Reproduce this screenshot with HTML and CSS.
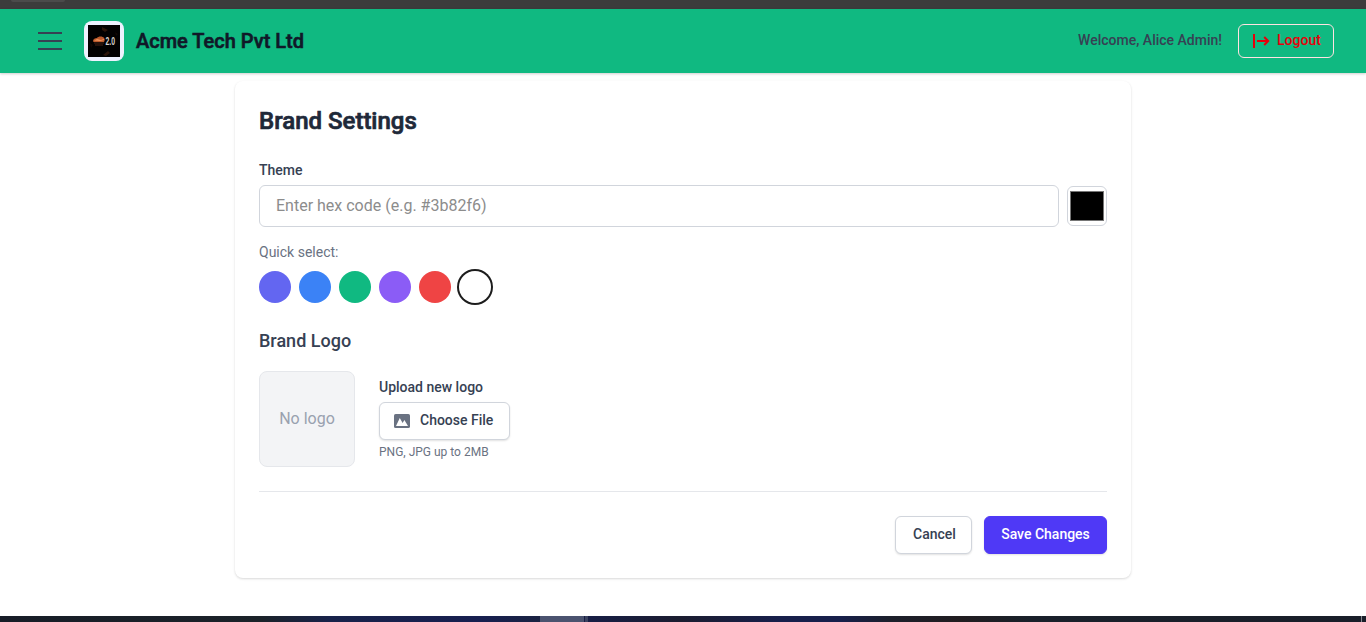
FILE: index.html
```
<!DOCTYPE html>
<html lang="en">
<head>
<meta charset="utf-8">
<title>Brand Settings</title>
<link rel="stylesheet" href="styles.css">
</head>
<body>
<div class="window-strip"><span class="window-tab"></span></div>
<header class="header">
  <svg class="menu" viewBox="0 0 24 18" width="24" height="18"><path d="M0 1h24M0 9h24M0 17h24" stroke="#364153" stroke-width="2"/></svg>
  <div class="brand-mark">
    <svg viewBox="0 0 32 32" width="32" height="32">
      <rect width="32" height="32" fill="#020101"/>
      <path d="M14 2l6 3-3 2-3-2zM15 30l5-4 2 2-4 3z" fill="#2b1409"/>
      <path d="M2 18l3 2-2 3zM27 7l3 2-2 2z" fill="#120905"/>
      <path d="M5 16c0-2 2-3 4-3 1-2 6-2 7 0 1 1 1 2 0 4H8c-2 0-3 0-3-1z" fill="#bc592b"/>
      <path d="M6 15.500l3-1.500 4 1 3-1v1l-4 1z" fill="#ef955d"/>
      <path d="M6 18h10M7 20h8" stroke="#4a2416" stroke-width="1"/>
      <text class="mark-text" x="17.500" y="20.300" textLength="9.500" lengthAdjust="spacingAndGlyphs">2.0</text>
    </svg>
  </div>
  <div class="company">Acme Tech Pvt Ltd</div>
  <div class="welcome">Welcome, Alice Admin!</div>
  <button class="logout">
    <svg viewBox="0 0 18 14" width="18" height="14" fill="none" stroke="#e7000b" stroke-width="2"><path d="M2 0v14M5 7h11.2M12.2 3l4 4-4 4"/></svg>
    <span>Logout</span>
  </button>
</header>
<main class="card">
  <h1 class="title">Brand Settings</h1>
  <label class="label theme-label" for="theme">Theme</label>
  <div class="theme-row">
    <input class="hex" id="theme" placeholder="Enter hex code (e.g. #3b82f6)">
    <div class="picker"><span class="picker-color"></span></div>
  </div>
  <p class="quick">Quick select:</p>
  <div class="swatches">
    <span class="swatch indigo"></span>
    <span class="swatch blue"></span>
    <span class="swatch green"></span>
    <span class="swatch violet"></span>
    <span class="swatch red"></span>
    <span class="swatch white"></span>
  </div>
  <h2 class="subtitle">Brand Logo</h2>
  <div class="logo-row">
    <div class="preview">No logo</div>
    <div class="upload">
      <div class="label upload-label">Upload new logo</div>
      <button class="button choose">
        <svg viewBox="0 0 16 14" width="16" height="14"><rect width="16" height="14" rx="1.6" fill="#6a7282"/><path d="M2 12l3.800-8 2.800 5 1.800-3 3.600 6z" fill="#fff"/></svg>
        <span>Choose File</span>
      </button>
      <p class="hint">PNG, JPG up to 2MB</p>
    </div>
  </div>
  <div class="actions">
    <button class="button cancel">Cancel</button>
    <button class="button save">Save Changes</button>
  </div>
</main>
<footer class="taskbar"><span class="task-active"></span><span class="task-edge"></span><span class="task-end"></span></footer>
</body>
</html>
```
FILE: styles.css
```
* { box-sizing: border-box; }
body {
  margin: 0;
  height: 622px;
  display: flex;
  flex-direction: column;
  overflow: hidden;
  background: #fff;
  font-family: Roboto, "Liberation Sans", sans-serif;
  font-size: 16px;
  line-height: 24px;
}
h1, h2, p { margin: 0; }
button, input { font-family: inherit; }
svg { display: block; flex: none; }

.window-strip { flex: none; height: 9px; background: #3c3c3c; }
.window-tab {
  display: block;
  width: 54px;
  height: 2px;
  margin-left: 11px;
  border-radius: 0 0 6px 6px;
  background: #4b4b4b;
}

.header {
  flex: none;
  height: 64px;
  display: flex;
  align-items: center;
  padding: 0 32px 0 38px;
  background: #10b981;
  box-shadow: 0 1px 3px rgba(0, 0, 0, .1), 0 1px 2px rgba(0, 0, 0, .1);
}
.brand-mark {
  width: 40px;
  height: 40px;
  margin-left: 22px;
  padding: 4px;
  border-radius: 8px;
  background: #eef2ff;
}
.mark-text { font: 700 10px "Liberation Sans", sans-serif; fill: #d9d5d3; }
.company {
  margin-left: 12px;
  font-size: 20px;
  font-weight: 500;
  line-height: 28px;
  color: #101828;
  -webkit-text-stroke: .6px #101828;
}
.welcome {
  margin-left: auto;
  font-size: 14px;
  font-weight: 500;
  line-height: 20px;
  color: #364153;
  padding-bottom: 2px;
}
.logout {
  width: 96px;
  height: 34px;
  margin-left: 16px;
  display: flex;
  align-items: center;
  gap: 7px;
  padding: 0 0 0 13px;
  border: 1px solid #ffe2e2;
  border-radius: 6px;
  background: transparent;
  color: #e7000b;
  font-size: 14px;
  font-weight: 500;
  line-height: 20px;
}
.logout span { padding-bottom: 2px; }

.card {
  flex: none;
  width: 896px;
  height: 497px;
  margin: 8px auto 0;
  padding: 24px;
  border-radius: 8px;
  background: #fff;
  box-shadow: 0 1px 3px rgba(0, 0, 0, .1), 0 1px 2px rgba(0, 0, 0, .06);
}
.title {
  margin-bottom: 23px;
  font-size: 24px;
  font-weight: 500;
  line-height: 32px;
  color: #1e2939;
  -webkit-text-stroke: .7px #1e2939;
}
.label {
  display: block;
  margin-bottom: 4px;
  font-size: 14px;
  font-weight: 500;
  line-height: 20px;
  color: #364153;
}
.theme-label { margin-bottom: 5px; }
.theme-row { display: flex; align-items: center; gap: 8px; }
.hex {
  flex: 1;
  height: 42px;
  padding: 0 16px 2px;
  border: 1px solid #d1d5dc;
  border-radius: 6px;
  font-size: 16px;
}
.hex::placeholder { color: #8c8c8c; }
.picker {
  width: 40px;
  height: 40px;
  padding: 4px 2px;
  border: 1px solid #d1d5dc;
  border-radius: 6px;
}
.picker-color { display: block; height: 30px; border: 1px solid #767676; background: #000; }
.quick { margin-top: 15px; font-size: 14px; line-height: 20px; color: #6a7282; }
.swatches { display: flex; gap: 8px; margin-top: 9px; }
.swatch { width: 32px; height: 32px; border-radius: 50%; }
.indigo { background: #6366f1; }
.blue { background: #3b82f6; }
.green { background: #10b981; }
.violet { background: #8b5cf6; }
.red { background: #ef4444; }
.white { background: #fff; box-shadow: 0 0 0 2px #1c1c1c; }
.subtitle {
  margin: 24px 0 16px;
  font-size: 18px;
  font-weight: 500;
  line-height: 28px;
  color: #364153;
}
.logo-row { display: flex; align-items: flex-start; gap: 24px; }
.preview {
  width: 96px;
  height: 96px;
  display: flex;
  align-items: center;
  justify-content: center;
  padding-bottom: 1px;
  border: 1px solid #e5e7eb;
  border-radius: 8px;
  background: #f3f4f6;
  color: #99a1af;
}
.upload { padding-top: 6px; }
.upload-label { margin-bottom: 5px; }
.button {
  height: 38px;
  padding: 0 16px 2px;
  border: 1px solid #d1d5dc;
  border-radius: 6px;
  background: #fff;
  box-shadow: 0 1px 2px rgba(0, 0, 0, .12);
  color: #364153;
  font-size: 14px;
  font-weight: 500;
  line-height: 20px;
}
.choose { width: 131px; display: flex; align-items: center; gap: 10px; padding: 0 0 0 14px; }
.choose span { padding-bottom: 2px; }
.hint { margin-top: 4px; font-size: 12px; line-height: 16px; color: #6a7282; }
.actions {
  display: flex;
  justify-content: flex-end;
  gap: 12px;
  margin-top: 24px;
  padding-top: 24px;
  border-top: 1px solid #e5e7eb;
}
.cancel { width: 77px; padding-left: 17px; }
.save { width: 123px; border-color: #4f39f6; background: #4f39f6; color: #fff; }

.taskbar {
  flex: none;
  height: 6px;
  margin-top: auto;
  display: flex;
  background: linear-gradient(90deg, #171d27 0, #1b2229 260px, #18224a 330px, #171f50 480px, #1a2342 540px, #171e45 590px, #1b1d30 680px, #171f4b 780px, #171f4b 840px, #1c1f2b 890px, #211d20 960px, #19202a 1030px, #191e29 100%);
}
.task-active { width: 44px; margin-left: 540px; background: #4b536f; }
.task-edge { width: 3px; margin-left: 1px; background: #3b4260; }
.task-end { width: 1px; margin-left: auto; margin-right: 4px; background: #858991; }
```
